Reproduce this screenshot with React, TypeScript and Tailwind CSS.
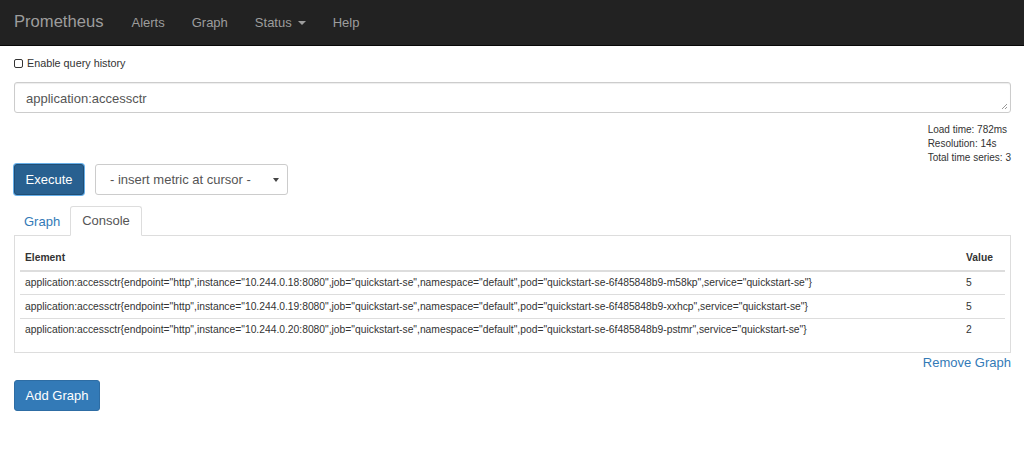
const ROWS = [
  {
    metric:
      'application:accessctr{endpoint="http",instance="10.244.0.18:8080",job="quickstart-se",namespace="default",pod="quickstart-se-6f485848b9-m58kp",service="quickstart-se"}',
    value: '5',
  },
  {
    metric:
      'application:accessctr{endpoint="http",instance="10.244.0.19:8080",job="quickstart-se",namespace="default",pod="quickstart-se-6f485848b9-xxhcp",service="quickstart-se"}',
    value: '5',
  },
  {
    metric:
      'application:accessctr{endpoint="http",instance="10.244.0.20:8080",job="quickstart-se",namespace="default",pod="quickstart-se-6f485848b9-pstmr",service="quickstart-se"}',
    value: '2',
  },
];

function Navbar() {
  return (
    <nav className="flex h-[46px] items-center border-b border-[#080808] bg-[#222222] px-[14px]">
      <span className="mr-[14px] text-[16.6px] text-[#9d9d9d]">Prometheus</span>
      <a className="px-[14px] text-[13px] text-[#9d9d9d]">Alerts</a>
      <a className="pl-[13px] pr-[14px] text-[13px] text-[#9d9d9d]">Graph</a>
      <a className="flex items-center pl-[13px] pr-[14px] text-[13px] text-[#9d9d9d]">
        Status
        <span className="ml-[6px] inline-block h-0 w-0 border-x-[4px] border-t-[4px] border-x-transparent border-t-[#9d9d9d]" />
      </a>
      <a className="px-[13px] text-[13px] text-[#9d9d9d]">Help</a>
    </nav>
  );
}

export default function App() {
  return (
    <div className="h-[454px] bg-white font-['Liberation_Sans',Arial,sans-serif] text-[#333]">
      <Navbar />
      <div className="px-[14px]">
        <label className="mt-[9px] flex items-center gap-[4px] text-[10.8px]">
          <span className="inline-block h-[9px] w-[9px] rounded-[2px] border-[1.5px] border-[#333]" />
          Enable query history
        </label>

        <div className="relative mt-[11px] h-[31px] w-[997px] rounded-[3px] border border-[#ccc] px-[11px] pt-[6px] text-[13px] text-[#555] shadow-[inset_0_1px_1px_rgba(0,0,0,0.075)]">
          application:accessctr
          <svg className="absolute bottom-[2px] right-[2px]" width="7" height="7" viewBox="0 0 7 7">
            <path d="M6 1L1 6M6 4L4 6" stroke="#999" strokeWidth="1" />
          </svg>
        </div>

        <div className="mt-[10px] flex w-[997px] justify-end text-[10px] leading-[14px]">
          <div>
            <div>Load time: 782ms</div>
            <div>Resolution: 14s</div>
            <div>Total time series: 3</div>
          </div>
        </div>

        <div className="mt-[-1px] flex items-center gap-[11px]">
          <button className="h-[31px] w-[70px] rounded-[3px] border border-[#204d74] bg-[#286090] text-[13px] text-white shadow-[0_0_0_1px_#66afe9]">
            Execute
          </button>
          <div className="flex h-[31px] w-[193px] items-center justify-between rounded-[3px] border border-[#ccc] pl-[14px] pr-[8px] text-[13px] text-[#555]">
            <span>- insert metric at cursor -</span>
            <span className="inline-block h-0 w-0 border-x-[3px] border-t-[4px] border-x-transparent border-t-[#444]" />
          </div>
        </div>

        <div className="mt-[11px] flex h-[30px] w-[997px] items-end border-b border-[#ddd]">
          <a className="mb-[-1px] flex h-[29px] items-center px-[10px] text-[13px] text-[#337ab7]">Graph</a>
          <a className="mb-[-1px] flex h-[30px] items-center rounded-t-[3px] border border-b-white border-[#ddd] bg-white px-[11px] text-[13px] text-[#555]">
            Console
          </a>
        </div>

        <div className="w-[997px] border-x border-b border-[#ddd] px-[5px] pt-[14px] pb-[10px]">
          <table className="w-full text-left text-[10.3px]">
            <thead>
              <tr className="border-b-2 border-[#ddd]">
                <th className="h-[21px] px-[5px] align-top font-bold">Element</th>
                <th className="w-[44px] px-[5px] align-top font-bold">Value</th>
              </tr>
            </thead>
            <tbody>
              {ROWS.map((row) => (
                <tr key={row.metric} className="border-b border-[#ddd] last:border-b-0">
                  <td className="h-[23.5px] px-[5px]">{row.metric}</td>
                  <td className="px-[5px]">{row.value}</td>
                </tr>
              ))}
            </tbody>
          </table>
        </div>

        <div className="flex w-[997px] justify-end">
          <a className="text-[13px] text-[#337ab7]">Remove Graph</a>
        </div>

        <button className="mt-[8px] h-[31px] w-[86px] rounded-[3px] border border-[#2e6da4] bg-[#337ab7] text-[13px] text-white">
          Add Graph
        </button>
      </div>
    </div>
  );
}
